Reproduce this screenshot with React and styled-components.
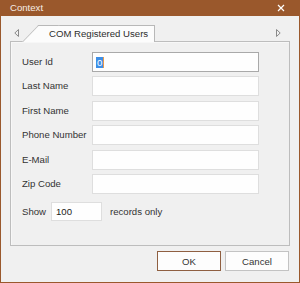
import React from 'react';
import styled, { createGlobalStyle } from 'styled-components';

const GlobalStyle = createGlobalStyle`
  html, body { margin: 0; padding: 0; background: #f0f0f0; }
  * { box-sizing: border-box; }
`;

const brown = '#9a582c';

const Window = styled.div`
  width: 300px;
  height: 283px;
  border: 1px solid ${brown};
  border-top: none;
  background: #f0f0f0;
  display: flex;
  flex-direction: column;
  font-family: "Liberation Sans", Arial, sans-serif;
  font-size: 9.6px;
  color: #333;
`;

const TitleBar = styled.div`
  height: 16px;
  margin: 0 -1px;
  padding: 0 15px 0 10px;
  background: ${brown};
  color: #f6ece4;
  display: flex;
  align-items: center;
  justify-content: space-between;
  line-height: 16px;
`;

const TabStrip = styled.div`
  height: 25px;
  padding: 0 18px 0 13px;
  display: flex;
  align-items: flex-end;
`;

const Arrow = styled.svg`
  width: 5px;
  height: 8px;
  align-self: flex-start;
  margin-top: 13px;
`;

const Tab = styled.div`
  position: relative;
  z-index: 1;
  width: 117px;
  height: 17px;
  margin: 0 auto -1px 19px;
  padding-left: 11px;
  background: #fcfcfc;
  border-top: 1px solid #b8b8b8;
  border-right: 1px solid #b8b8b8;
  line-height: 15px;
  color: #2e2e2e;

  &::before {
    content: '';
    position: absolute;
    left: -16px;
    top: -1px;
    bottom: 0;
    width: 20px;
    background: #fcfcfc;
    border-left: 1px solid #b8b8b8;
    border-top: 1px solid #b8b8b8;
    transform: skewX(-44deg);
    transform-origin: bottom left;
  }
`;

const TabLabel = styled.span`
  position: relative;
`;

const Panel = styled.div`
  height: 205px;
  margin: 0 9px;
  border: 1px solid #bdbdbd;
  box-shadow: inset 1px 1px 0 #f7f7f7;
  padding: 10px 0 0 11px;
`;

const FormGrid = styled.div`
  display: grid;
  grid-template-columns: 70px 167px;
  grid-auto-rows: 20px;
  row-gap: 4.4px;
  align-items: center;
`;

const Label = styled.div`
  line-height: 20px;
  white-space: nowrap;
`;

const Box = styled.div`
  height: ${(p) => (p.$h ? p.$h : 20)}px;
  width: ${(p) => (p.$w ? `${p.$w}px` : '100%')};
  background: #fefefe;
  border: 1px solid ${(p) => (p.$focused ? '#a9a9a9' : '#dedede')};
  padding: 0 4px;
  display: flex;
  align-items: center;
  color: #222;
`;

const Selected = styled.span`
  background: #3d8ee6;
  color: #fff;
  padding: 0 1px;
  line-height: 11px;
  margin-left: -1px;
  border-right: 1px solid #e89a4a;
`;

const ShowRow = styled.div`
  margin-top: 8px;
  display: flex;
  align-items: center;
  gap: 8px;
`;

const ShowLabel = styled.span`
  width: 21px;
`;

const Footer = styled.div`
  display: flex;
  justify-content: flex-end;
  gap: 4px;
  padding: 5px 10px 0 0;
`;

const Button = styled.div`
  width: 64px;
  height: 20px;
  display: flex;
  align-items: center;
  justify-content: center;
  background: #fdfdfd;
  border: 1px solid ${(p) => (p.$primary ? '#8f5f41' : '#c3c3c3')};
  color: #333;
`;

const fields = ['User Id', 'Last Name', 'First Name', 'Phone Number', 'E-Mail', 'Zip Code'];

export default function App() {
  return (
    <>
      <GlobalStyle />
      <Window>
        <TitleBar>
          <span>Context</span>
          <svg width="8" height="8" viewBox="0 0 8 8">
            <path d="M1 1L7 7M7 1L1 7" stroke="#fff" strokeWidth="1.2" />
          </svg>
        </TitleBar>
        <TabStrip>
          <Arrow viewBox="0 0 5 8">
            <path d="M4.5 0.5L0.8 4L4.5 7.5Z" fill="none" stroke="#8a8a8a" strokeWidth="1" />
          </Arrow>
          <Tab>
            <TabLabel>COM Registered Users</TabLabel>
          </Tab>
          <Arrow viewBox="0 0 5 8">
            <path d="M0.5 0.5L4.2 4L0.5 7.5Z" fill="none" stroke="#8a8a8a" strokeWidth="1" />
          </Arrow>
        </TabStrip>
        <Panel>
          <FormGrid>
            {fields.map((f, i) => (
              <React.Fragment key={f}>
                <Label>{f}</Label>
                <Box $focused={i === 0}>{i === 0 && <Selected>0</Selected>}</Box>
              </React.Fragment>
            ))}
          </FormGrid>
          <ShowRow>
            <ShowLabel>Show</ShowLabel>
            <Box $w={51} $h={19}>100</Box>
            <span>records only</span>
          </ShowRow>
        </Panel>
        <Footer>
          <Button $primary>OK</Button>
          <Button>Cancel</Button>
        </Footer>
      </Window>
    </>
  );
}
